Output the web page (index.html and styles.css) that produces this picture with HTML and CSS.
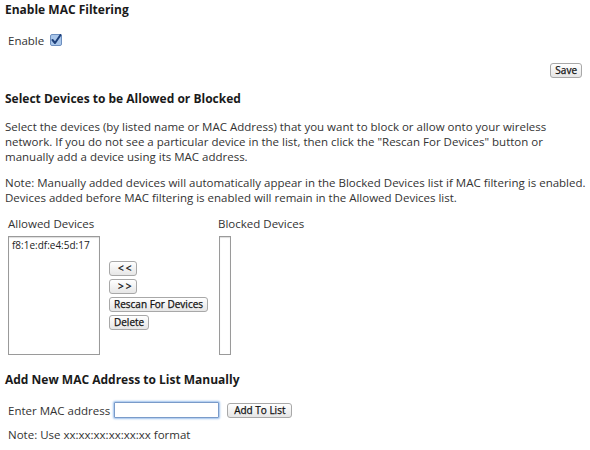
FILE: index.html
```html
<!DOCTYPE html>
<html>
<head>
<meta charset="utf-8">
<link rel="stylesheet" href="styles.css">
</head>
<body>
<div class="page">
  <h2 class="heading">Enable MAC Filtering</h2>
  <div class="enable-row">
    <span class="label">Enable</span>
    <span class="check">
      <svg width="12" height="12" viewBox="0 0 12 12">
        <rect x="0.5" y="0.5" width="11" height="11" rx="1.5" fill="#a9c6ea" stroke="#6d8fbf"/>
        <path d="M2.5 6 L5 9 L10.5 1" fill="none" stroke="#1d3f7a" stroke-width="2" stroke-linecap="round" stroke-linejoin="round"/>
      </svg>
    </span>
  </div>
  <div class="save-row"><button class="btn">Save</button></div>

  <h2 class="heading h-select">Select Devices to be Allowed or Blocked</h2>
  <p class="para">Select the devices (by listed name or MAC Address) that you want to block or allow onto your wireless network. If you do not see a particular device in the list, then click the "Rescan For Devices" button or manually add a device using its MAC address.</p>
  <p class="para">Note: Manually added devices will automatically appear in the Blocked Devices list if MAC filtering is enabled. Devices added before MAC filtering is enabled will remain in the Allowed Devices list.</p>

  <div class="lists">
    <div class="col col-allowed">
      <div class="col-label">Allowed Devices</div>
      <div class="listbox allowed"><div class="item">f8:1e:df:e4:5d:17</div></div>
    </div>
    <div class="actions">
      <button class="btn btn-arrow">&lt;&lt;</button>
      <button class="btn btn-arrow">&gt;&gt;</button>
      <button class="btn">Rescan For Devices</button>
      <button class="btn">Delete</button>
    </div>
    <div class="col col-blocked">
      <div class="col-label">Blocked Devices</div>
      <div class="listbox blocked"></div>
    </div>
  </div>

  <h2 class="heading h-add">Add New MAC Address to List Manually</h2>
  <div class="add-row">
    <span class="label">Enter MAC address</span>
    <input class="mac-input" type="text">
    <button class="btn">Add To List</button>
  </div>
  <div class="note">Note: Use xx:xx:xx:xx:xx:xx format</div>
</div>
</body>
</html>
```
FILE: styles.css
```css
html, body { margin: 0; padding: 0; background: #fff; overflow: hidden; }
body { font-family: "Open Sans", "DejaVu Sans", sans-serif; font-size: 11.5px; color: #222; }
.page { padding: 0 0 0 5px; width: 585px; }
.heading { font-size: 12px; font-weight: bold; margin: 0; color: #1a1a1a; line-height: 16px; }
.heading:first-child { padding-top: 2px; }
.enable-row { display: flex; align-items: center; padding-left: 3px; margin-top: 14px; height: 16px; }
.label { color: #333; }
.check { display: inline-flex; margin-left: 6px; }
.save-row { display: flex; justify-content: flex-end; margin-top: 15px; padding-right: 8px; }
.btn { font-family: "Open Sans", "DejaVu Sans", sans-serif; font-size: 10px; font-weight: normal; color: #111;
  -webkit-text-stroke: 0.25px #111;
  background: linear-gradient(#ffffff, #e6e6e6); border: 1px solid #a8a8a8; border-radius: 3px;
  padding: 0 4px; height: 15px; line-height: 13px; margin: 0; }
.btn-arrow { padding: 0 6px; letter-spacing: 2px; text-indent: 2px; width: 28px; }
.h-select { margin-top: 13px; }
.para { margin: 12px 0 0; line-height: 15px; color: #333; }
.para + .para { margin-top: 11px; }
.lists { display: flex; margin-top: 11px; padding-left: 3px; }
.col-label { color: #333; line-height: 15px; }
.listbox { border: 1px solid #9a9a9a; box-shadow: inset 0 1px 1px #ddd; height: 117px; margin-top: 5px; }
.allowed { width: 90px; }
.blocked { width: 10px; margin-left: 1px; }
.item { font-size: 10px; padding: 2px 3px; line-height: 12px; color: #222; }
.actions { display: flex; flex-direction: column; align-items: flex-start; gap: 3px; margin-top: 45px; margin-left: 9px; width: 109px; }
.h-add { margin-top: 17px; }
.add-row { display: flex; align-items: center; padding-left: 3px; margin-top: 14px; }
.mac-input { width: 103px; height: 14px; border: 1px solid #7a9bc9; box-shadow: 0 0 2px 1px #9cc0ec; margin: 0 8px 0 4px; padding: 0; border-radius: 1px; }
.add-row .btn { padding: 0 6px; }
.note { padding-left: 3px; margin-top: 9px; color: #333; }
```
